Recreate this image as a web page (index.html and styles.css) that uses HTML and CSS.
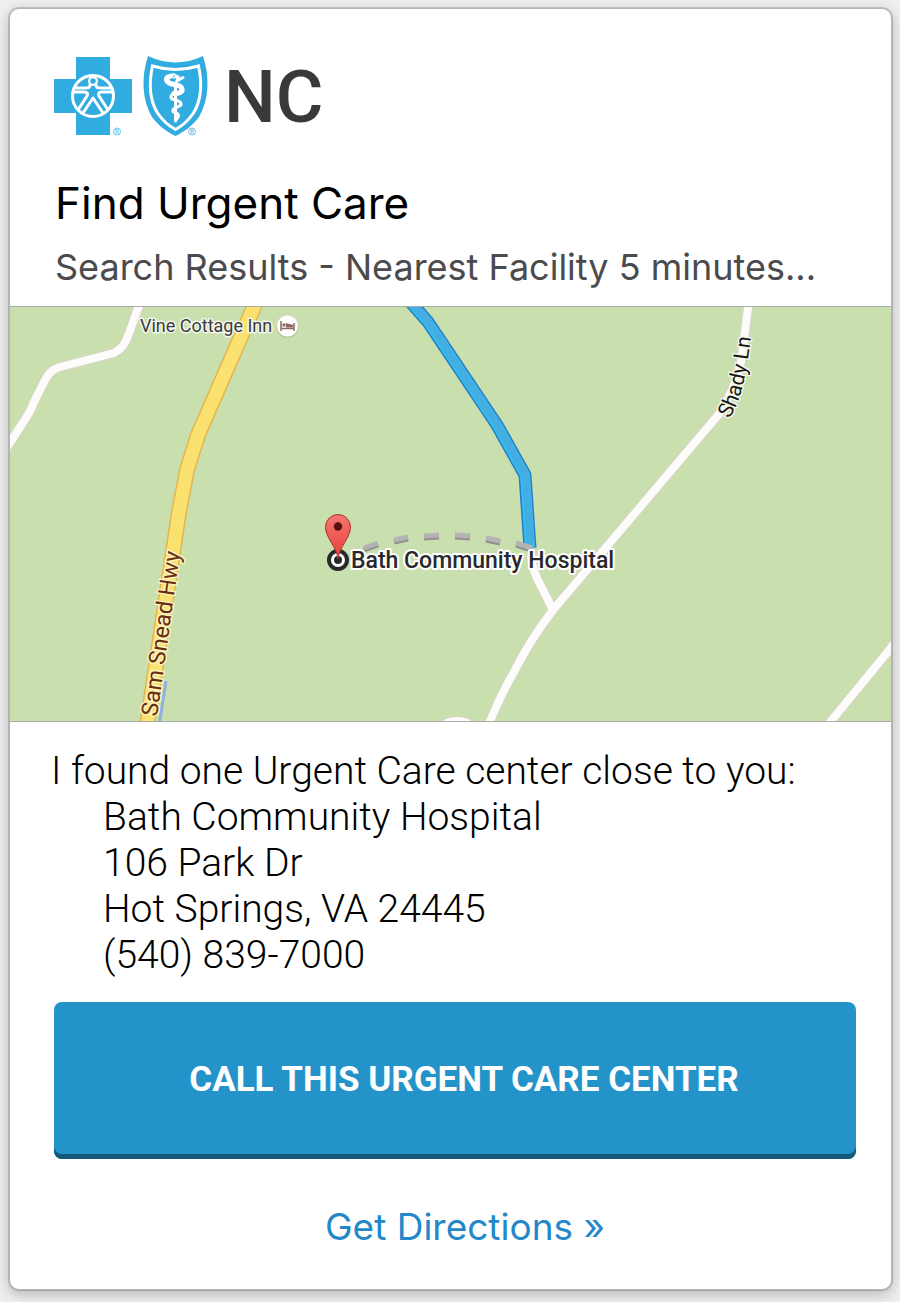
FILE: index.html
```html
<!DOCTYPE html>
<html lang="en">
<head>
<meta charset="utf-8">
<meta name="viewport" content="width=device-width, initial-scale=1">
<title>Find Urgent Care</title>
<link rel="stylesheet" href="styles.css">
</head>
<body>
<main class="card">
  <header class="header">
    <div class="brand">
      <svg class="brand-marks" viewBox="0 0 156 84" role="img" aria-label="Blue Cross Blue Shield">
        <path class="brand-fill" d="M22 2h34v22h22v34h-22v22h-34v-22h-22v-34h22z"/>
        <circle class="brand-fill figure-line" cx="39" cy="41" r="20.500"/>
        <g class="figure-line">
          <path d="M20 33H32Q36 33 36 30L37 28.500"/>
          <path d="M58 33H46Q42 33 42 30L41 28.500"/>
          <path d="M19 37H30Q35 37 33 41L24 55"/>
          <path d="M59 37H48Q43 37 45 41L54 55"/>
          <path d="M29 58L39 43L49 58"/>
        </g>
        <circle class="paper-fill" cx="39" cy="26" r="5"/>
        <circle class="brand-fill" cx="39" cy="26" r="2.700"/>
        <path class="brand-fill" d="M94 1Q121.500 14 149 1C156 22 155 45 145 62C138 71 130 77 121.500 81C113 77 105 71 98 62C88 45 87 22 94 1Z"/>
        <path class="shield-line" d="M98.500 11Q121.500 18 144.500 11C148 27 148 44 139.500 58C134 66 128 71 121.500 74.500C115 71 109 66 103.500 58C95 44 95 27 98.500 11Z"/>
        <path class="staff" d="M121.500 28V66"/>
        <path class="snake-wide" d="M120 21Q112 21 112.500 25Q114 29 121 29.500Q129 31 128 36Q125 39 120 38.500"/>
        <path class="snake" d="M120 38.500Q115 41 118 44Q128 46 127 50Q124 52 119.500 54Q117 57 122 58Q127 60 122 65"/>
        <path class="snake-head" d="M119 20L124 22L123 26L129 22.500"/>
        <path class="snake-eye" d="M117 24.500Q120 22 121 20"/>
        <g class="registered"><circle cx="63" cy="76.500" r="3.500"/><circle cx="138" cy="76.500" r="3.500"/>
          <text x="63" y="78.500">R</text><text x="138" y="78.500">R</text></g>
      </svg>
      <span class="brand-state">NC</span>
    </div>
    <h1 class="title">Find Urgent Care</h1>
    <p class="subtitle">Search Results - Nearest Facility 5 minutes...</p>
  </header>

  <svg class="map" viewBox="10 307 881 414" role="img" aria-label="Map of Bath Community Hospital">
    <defs>
      <path id="shady-path" d="M729 419C743 398 746 374 752 330"/>
      <linearGradient id="pin-fill" x1="0" y1="0" x2="0" y2="1"><stop offset="0" stop-color="#f47770"/><stop offset="1" stop-color="#e83f3a"/></linearGradient>
    </defs>
    <g class="road-edge">
      <path d="M141 300L128 336Q124 348 114 353L60 367Q50 370 45 380L34 402Q31 411 24 421L4 452"/>
      <path d="M749 300L743 347Q740 382 719 414L553 610Q530 640 514 672Q502 692 488 726"/>
      <path d="M531 555Q533 573 541 586L553 610"/>
      <path d="M895 643L827 726"/>
      <path d="M441 727Q447 721 458 721Q466 721 473 727"/>
    </g>
    <g class="road">
      <path d="M141 300L128 336Q124 348 114 353L60 367Q50 370 45 380L34 402Q31 411 24 421L4 452"/>
      <path d="M749 300L743 347Q740 382 719 414L553 610Q530 640 514 672Q502 692 488 726"/>
      <path d="M531 555Q533 573 541 586L553 610"/>
      <path d="M895 643L827 726"/>
      <path d="M441 727Q447 721 458 721Q466 721 473 727"/>
    </g>
    <path class="highway-edge" d="M257 300L229 364L198 435L187 470L179 512L147 726"/>
    <path class="highway" d="M257 300L229 364L198 435L187 470L179 512L147 726"/>
    <path class="stream" d="M166 681L159 726"/>
    <path class="route-edge" d="M407 298L428 322L497 425L525 475L530 548"/>
    <path class="route-glow" d="M407 298L428 322L497 425L525 475L530 548"/>
    <path class="route" d="M408 298L429 322L498 425L526 475L531 546"/>
    <g class="walk-shade"><path d="M364 550L378 545"/><path d="M394 542L408 539"/><path d="M424 538L439 537"/><path d="M455 537L470 538"/><path d="M486 540L500 543"/><path d="M516 545L532 550"/></g>
    <g class="walk"><path d="M364 548L378 543"/><path d="M394 540L408 537"/><path d="M424 536L439 535"/><path d="M455 535L470 536"/><path d="M486 538L500 541"/><path d="M516 543L532 548"/></g>

    <circle class="lodging-shade" cx="287.500" cy="327" r="11"/>
    <circle class="paper-fill" cx="287.500" cy="326" r="10.500"/>
    <path class="lodging" d="M281 321V331M281 328.500H294M294 323V331"/>
    <circle class="lodging-fill" cx="284" cy="325" r="1.700"/>
    <path class="lodging-fill" d="M286 323L293 325V327.500H286Z"/>

    <text class="label" x="140" y="332">Vine Cottage Inn</text>
    <text class="label label-street"><textPath href="#shady-path">Shady Ln</textPath></text>
    <text class="label label-highway" transform="translate(157 717) rotate(-82)">Sam Snead Hwy</text>
    <text class="label label-place" x="351" y="568">Bath Community Hospital</text>

    <circle class="target" cx="338" cy="560" r="9"/>
    <circle class="target-dot" cx="338" cy="560" r="4"/>
    <path class="pin" d="M338 559C337 547 325.500 538 325.500 527A12.500 12.500 0 0 1 350.500 527C350.500 538 339 547 338 559Z"/>
    <circle class="pin-dot" cx="338" cy="526.500" r="4.200"/>
  </svg>

  <section class="result">
    <p class="lead">I found one Urgent Care center close to you:</p>
    <address class="address">Bath Community Hospital<br>106 Park Dr<br>Hot Springs, VA 24445<br>(540) 839-7000</address>
  </section>
  <div class="actions">
    <button class="call" type="button">CALL THIS URGENT CARE CENTER</button>
    <a class="directions" href="#directions">Get Directions »</a>
  </div>
</main>
</body>
</html>
```
FILE: styles.css
```css
* { box-sizing: border-box; }
body {
  margin: 0;
  padding: 8px 8px 12px 9px;
  background: #efefef;
  color: #000;
  font-family: Inter, "Liberation Sans", Arial, sans-serif;
}
.card {
  display: flex;
  flex-direction: column;
  overflow: hidden;
  padding-bottom: 34px;
  border: 1px solid #b5b5b5;
  border-radius: 10px;
  background: #fff;
  box-shadow: 0 0 0 1px rgba(0, 0, 0, 0.15), 0 4px 14px rgba(0, 0, 0, 0.25);
}
.header { padding: 46px 44px 13px; }
.brand { display: flex; align-items: center; gap: 14px; height: 84px; }
.brand-marks { width: 156px; height: 84px; overflow: visible; }
.brand-state {
  color: #39393b;
  font: 500 73px/84px Roboto, sans-serif;
}
.brand-fill { fill: #31ace1; }
.paper-fill { fill: #fff; }
.figure-line { stroke: #fff; stroke-width: 3px; }
g.figure-line { fill: none; stroke-linejoin: round; }
.shield-line { fill: none; stroke: #fff; stroke-width: 3px; }
.staff, .snake, .snake-wide, .snake-head { fill: none; stroke: #fff; stroke-linecap: round; }
.staff { stroke-width: 3px; }
.snake { stroke-width: 3px; }
.snake-wide { stroke-width: 5px; }
.snake-head { stroke-width: 3px; }
.snake-eye { fill: none; stroke: #31ace1; stroke-width: 1px; }
.registered { fill: none; stroke: #31ace1; stroke-width: 0.7px; }
.registered text { fill: #31ace1; stroke: none; font-size: 6px; text-anchor: middle; }
.title { margin: 38px 1px 0; font-size: 44px; line-height: 52px; font-weight: 400; }
.subtitle { margin: 14px 1px 0; color: #4b4b4d; font-size: 36px; line-height: 48px; white-space: nowrap; }
.map {
  display: block;
  width: 100%;
  height: auto;
  margin-top: 2px;
  border-top: 1px solid #a9aba6;
  border-bottom: 1px solid #a9aba6;
  background: #cadfae;
}
.road-edge, .road, .highway-edge, .highway, .route-edge, .route-glow, .route, .stream, .walk, .walk-shade { fill: none; stroke-linejoin: round; }
.road-edge { stroke: #d8d3c8; stroke-width: 10px; }
.road { stroke: #fdfcfa; stroke-width: 8px; }
.highway-edge { stroke: #e2b750; stroke-width: 16px; }
.highway { stroke: #fbe170; stroke-width: 13px; }
.stream { stroke: #8fb1e3; stroke-width: 3px; }
.route-edge { stroke: #247fc5; stroke-width: 13px; }
.route-glow { stroke: #35bdf1; stroke-width: 10px; }
.route { stroke: #43aee1; stroke-width: 8px; }
.walk { stroke: #b3b3b3; stroke-width: 5px; }
.walk-shade { stroke: #8f8f8f; stroke-width: 5px; }
.label {
  fill: #3c3c3a;
  stroke: #f3f7ec;
  stroke-width: 3px;
  stroke-linejoin: round;
  paint-order: stroke;
  font: 400 18px Roboto, sans-serif;
}
.label-street { fill: #1c1611; font-size: 21px; }
.label-highway { fill: #6a2e0d; stroke: #fdf3bd; font-size: 23px; }
.label-place { fill: #29292b; stroke: #fff; stroke-width: 4px; font-size: 23px; font-weight: 500; }
.lodging-shade { fill: #b7c7a1; }
.lodging { fill: none; stroke: #8d6762; stroke-width: 1.5px; }
.lodging-fill { fill: #8d6762; }
.target { fill: #fff; stroke: #292929; stroke-width: 4px; }
.target-dot { fill: #292929; }
.pin { fill: url(#pin-fill); stroke: #ad3029; stroke-width: 1px; }
.pin-dot { fill: #5c0f10; }
.result { padding: 26px 41px 0; font: 300 39px/46px Roboto, "Liberation Sans", sans-serif; }
.lead { margin: 0; }
.address { padding-left: 52px; font-style: normal; }
.actions { display: flex; flex-direction: column; padding: 24px 35px 0 44px; gap: 40px; }
.call {
  padding: 51px 16px 52px 34px;
  border: 0;
  border-radius: 8px;
  background: #2493c9;
  box-shadow: inset 0 -5px #14587c;
  color: #fff;
  font: 700 35px/54px Roboto, "Liberation Sans", sans-serif;
}
.directions {
  padding-left: 20px;
  color: #2388c9;
  font-size: 37px;
  line-height: 56px;
  text-align: center;
  text-decoration: none;
}
```
